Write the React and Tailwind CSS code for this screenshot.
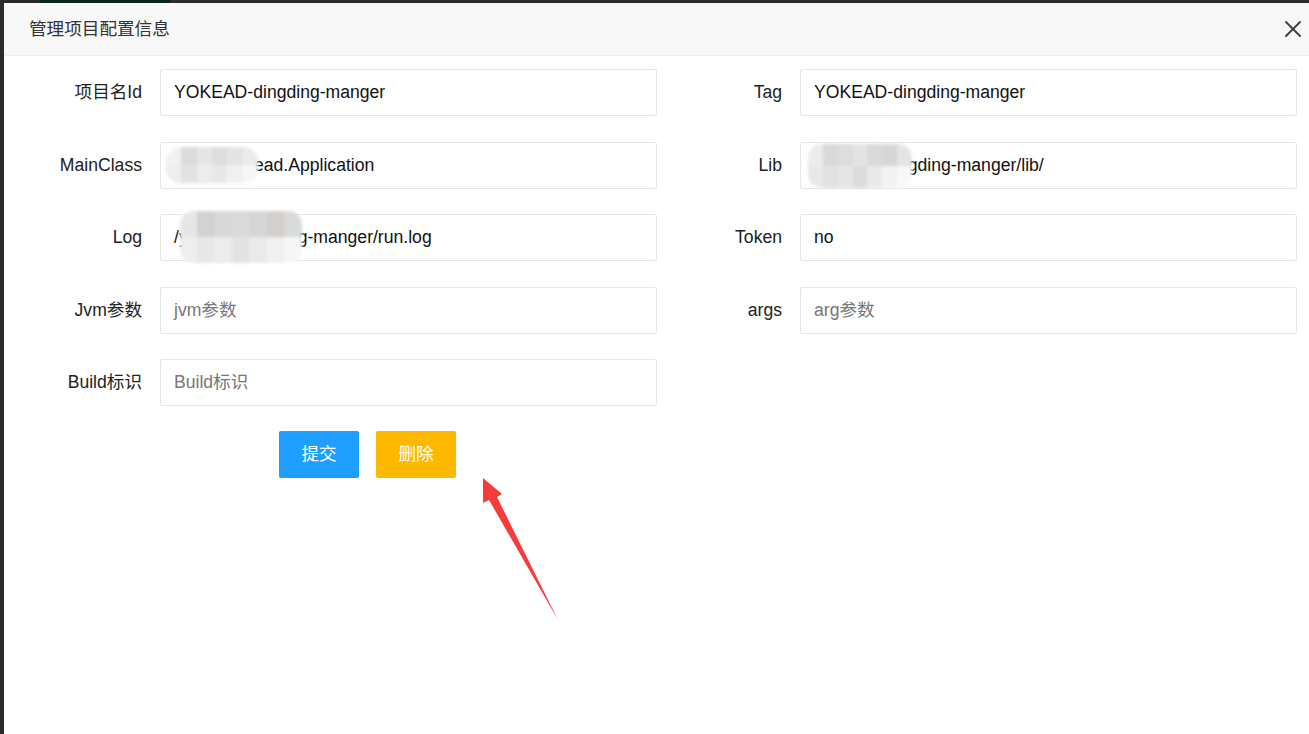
import { X } from "lucide-react";

const font = { fontFamily: '"Liberation Sans", "Noto Sans CJK SC", sans-serif' };

const Mosaic = ({ w, cells, className = "" }) => (
  <div
    className={`relative shrink-0 grid grid-rows-2 blur-[1.5px] rounded-[14px] overflow-hidden ${className}`}
    style={{ width: w, gridTemplateColumns: `repeat(${cells[0].length}, 1fr)` }}
  >
    {cells.flat().map((c, i) => (
      <div key={i} style={{ background: c }} />
    ))}
  </div>
);

const Field = ({ label, labelW, value, placeholder, children }) => (
  <div className="flex items-center">
    <label
      className="text-right pr-[18px] text-[17.6px] text-[#222] shrink-0"
      style={{ width: labelW }}
    >
      {label}
    </label>
    <div className="w-[497px] h-[47px] border border-[#e6e6e6] rounded-[2px] bg-white flex items-center pl-[13px] text-[17.6px] text-[#111] overflow-visible whitespace-nowrap">
      {children ? (
        children
      ) : value ? (
        <span>{value}</span>
      ) : (
        <span className="text-[#777]">{placeholder}</span>
      )}
    </div>
  </div>
);

const Row = ({ left, right }) => (
  <div className="flex h-[47px] mb-[25.5px]">
    <div className="w-[653px]">{left}</div>
    <div>{right}</div>
  </div>
);

export default function App() {
  const g1 = ["#f2f2f2", "#dcdcdc", "#e6e6e6", "#dedede", "#e4e4e4", "#ebebeb"];
  const g2 = ["#eeeeee", "#e2e2e2", "#ececec", "#e8e8e8", "#f0f0f0", "#f6f6f6"];

  return (
    <div className="w-[1309px] h-[734px] bg-[#2b2b2b] overflow-hidden relative" style={font}>
      <div className="h-[3px] flex">
        <div className="w-[40px] bg-[#2a2a2a]" />
        <div className="w-[130px] bg-[#0c2520]" />
        <div className="flex-1 bg-[#2d2d2d]" />
      </div>
      <div className="ml-[4px] h-[731px] bg-white flex flex-col">
        <div className="h-[53px] shrink-0 bg-[#f8f8f8] border-b border-[#eeeeee] flex items-center justify-between pl-[25px] pr-[2px]">
          <span className="text-[17.6px] text-[#333]">管理项目配置信息</span>
          <X className="w-[28px] h-[28px] text-[#3e3e46]" strokeWidth={1.6} />
        </div>

        <div className="pt-[13px]">
          <Row
            left={<Field label="项目名Id" labelW={156} value="YOKEAD-dingding-manger" />}
            right={<Field label="Tag" labelW={143} value="YOKEAD-dingding-manger" />}
          />
          <Row
            left={
              <Field label="MainClass" labelW={156}>
                <Mosaic w={92} className="h-[36px] -ml-[8px]" cells={[g1, g2]} />
                <span className="-ml-[4px]">ead.Application</span>
              </Field>
            }
            right={
              <Field label="Lib" labelW={143}>
                <Mosaic w={104} className="h-[44px] -ml-[6px] mt-[2px]" cells={[["#ececec", "#d9d9d9", "#dddddd", "#e3e3e3", "#dadada", "#d6d6d6", "#e4e4e4"], ["#e8e8e8", "#e1e1e1", "#e6e6e6", "#dcdcdc", "#e9e9e9", "#f2f2f2", "#f8f8f8"]]} />
                <span className="-ml-[14px]">..gding-manger/lib/</span>
              </Field>
            }
          />
          <Row
            left={
              <Field label="Log" labelW={156}>
                <span>/y</span>
                <Mosaic w={122} className="h-[52px] -ml-[8px] -mt-[2px]" cells={[["#e6e6e6", "#d2d2d2", "#d8d8d8", "#dadada", "#d6d6d6", "#d3cfcc", "#d8dadc"], ["#eeeeee", "#e8e8e8", "#ececec", "#e2e2e2", "#eaeaea", "#f0f0f0", "#f6f6f6"]]} />
                <span className="-ml-[4px]">g-manger/run.log</span>
              </Field>
            }
            right={<Field label="Token" labelW={143} value="no" />}
          />
          <Row
            left={<Field label="Jvm参数" labelW={156} placeholder="jvm参数" />}
            right={<Field label="args" labelW={143} placeholder="arg参数" />}
          />
          <Row left={<Field label="Build标识" labelW={156} placeholder="Build标识" />} />

          <div className="flex gap-[17px] pl-[275px] -mt-[0.5px]">
            <button className="w-[80px] h-[47px] bg-[#1e9fff] text-white text-[17.6px] rounded-[2px]">
              提交
            </button>
            <button className="w-[80px] h-[47px] bg-[#ffb800] text-white text-[17.6px] rounded-[2px]">
              删除
            </button>
          </div>
        </div>
      </div>

      <svg className="absolute left-0 top-0 pointer-events-none" width="1309" height="734">
        <polygon
          points="483,478 502,494 497,497 558,620 489,500 483,503"
          fill="#f53c3c"
        />
      </svg>
    </div>
  );
}
